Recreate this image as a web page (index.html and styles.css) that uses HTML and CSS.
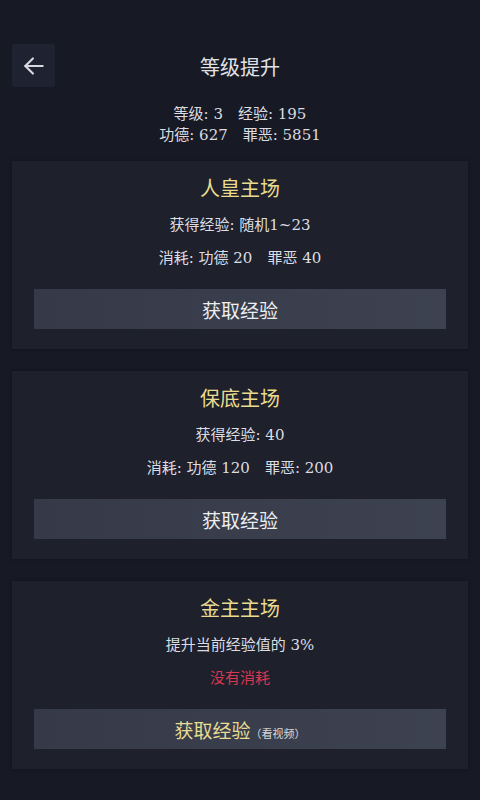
FILE: index.html
```html
<!DOCTYPE html>
<html lang="zh-CN">

<head>
    <meta charset="UTF-8">
    <meta name="viewport" content="width=device-width, initial-scale=1.0">
    <title>等级提升</title>
    <link rel="stylesheet" href="styles.css">
</head>

<body>
    <div class="page">
        <div class="header">
            <button class="back">
                <svg width="26" height="26" viewBox="0 0 24 24" fill="none" stroke="#d8d9de" stroke-width="2" stroke-linecap="round" stroke-linejoin="round">
                    <path d="M20 12H4"></path>
                    <path d="M11 5l-7 7 7 7"></path>
                </svg>
            </button>
            <h1>等级提升</h1>
            <div class="spacer"></div>
        </div>

        <div class="stats">
            <div>等级: 3　经验: 195</div>
            <div>功德: 627　罪恶: 5851</div>
        </div>

        <div class="card">
            <div class="card-title">人皇主场</div>
            <div class="line">获得经验: 随机1~23</div>
            <div class="line">消耗: 功德 20　罪恶 40</div>
            <button class="get">获取经验</button>
        </div>

        <div class="card">
            <div class="card-title">保底主场</div>
            <div class="line">获得经验: 40</div>
            <div class="line">消耗: 功德 120　罪恶: 200</div>
            <button class="get">获取经验</button>
        </div>

        <div class="card">
            <div class="card-title">金主主场</div>
            <div class="line">提升当前经验值的 3%</div>
            <div class="line free">没有消耗</div>
            <button class="get video">获取经验<span class="note">（看视频）</span></button>
        </div>
    </div>
</body>

</html>
```

FILE: styles.css
```css
body {
    margin: 0;
    padding: 0;
    background-color: #171a24;
    color: #dcdde2;
    font-family: "DejaVu Serif", "Noto Sans CJK SC", serif;
}

.page {
    padding: 44px 12px 0;
    display: flex;
    flex-direction: column;
}

.header {
    display: flex;
    align-items: center;
    justify-content: space-between;
    height: 43px;
}

.back {
    width: 43px;
    height: 43px;
    background-color: #1f2230;
    border: none;
    border-radius: 3px;
    padding: 0;
    display: flex;
    align-items: center;
    justify-content: center;
}

.spacer {
    width: 43px;
}

h1 {
    margin: 2px 0 0;
    font-size: 20px;
    font-weight: normal;
    color: #e2e3e7;
}

.stats {
    margin: 17px 0 15px;
    text-align: center;
    font-size: 15px;
    line-height: 21px;
}

.card {
    background-color: #1e202b;
    box-shadow: 0 0 3px rgba(0, 0, 0, 0.35);
    padding: 15px 22px 20px;
    margin-bottom: 22px;
    text-align: center;
    display: flex;
    flex-direction: column;
}

.card-title {
    font-size: 20px;
    line-height: 26px;
    color: #eadc8f;
}

.line {
    margin-top: 12px;
    font-size: 15px;
    line-height: 22px;
}

.line + .line {
    margin-top: 11px;
}

.line.free {
    color: #d83752;
}

.get {
    margin-top: 20px;
    height: 40px;
    border: none;
    background: linear-gradient(90deg, #363a48, #3d4250);
    color: #eeeef0;
    font-family: inherit;
    font-size: 19px;
}

.get.video {
    color: #e8dc92;
}

.note {
    font-size: 11px;
    color: #d8d9de;
}
```
